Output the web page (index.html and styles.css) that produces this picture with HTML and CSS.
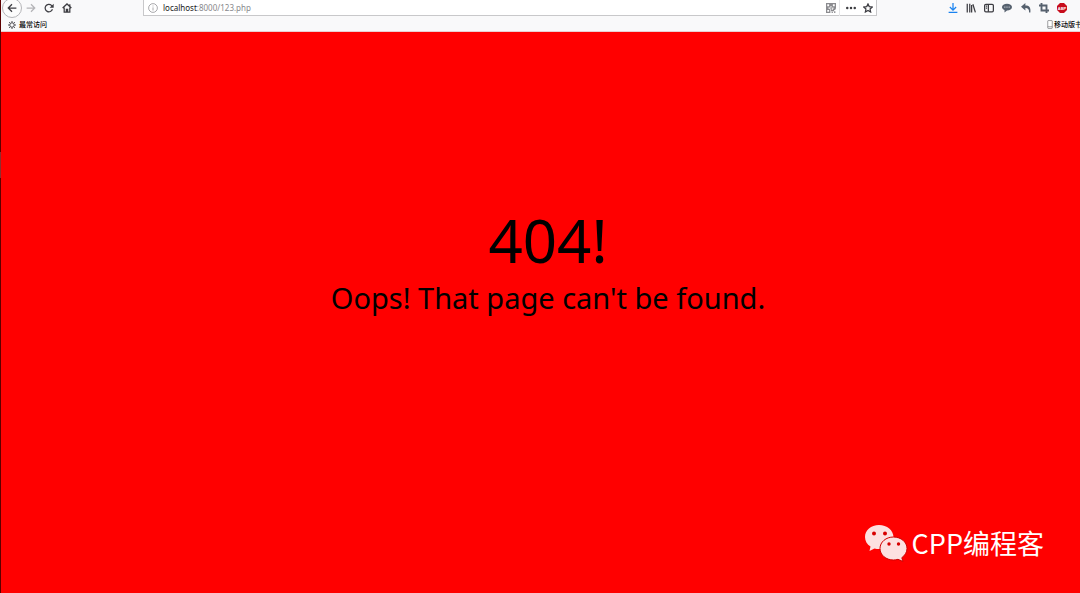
FILE: index.html
```html
<!DOCTYPE html>
<html lang="zh-CN">
<head>
<meta charset="utf-8">
<title>404</title>
<link rel="stylesheet" href="styles.css">
</head>
<body>
<div class="window">
  <header class="chrome">
    <div class="toolbar">
      <nav class="nav" aria-label="Navigation">
        <button class="tool back" aria-label="Back"><svg class="icon" viewBox="0 0 16 16"><path d="M15 8H2M8 2L2 8l6 6"/></svg></button>
        <button class="tool disabled" aria-label="Forward"><svg class="icon" viewBox="0 0 16 16"><path d="M1 8h13M8 2l6 6-6 6"/></svg></button>
        <button class="tool" aria-label="Reload"><svg class="icon" viewBox="0 0 16 16"><path d="M13.5 10A6 6 0 1 1 12 3.800L13.500 5.500"/><path class="fill" d="M15.500 1v6.500H9z"/></svg></button>
        <button class="tool" aria-label="Home"><svg class="icon" viewBox="0 0 16 16"><path d="M1 8l7-6.500L15 8M3.500 7v7.500h9V7M7 14v-4h2v4M12.500 5V2"/></svg></button>
      </nav>
      <div class="address">
        <svg class="icon info" viewBox="0 0 16 16"><circle cx="8" cy="8" r="7"/><path d="M8 7v5M8 4v1.500"/></svg>
        <a class="url" href="#"><span class="host">localhost</span>:8000/123.php</a>
        <button class="tool qr" aria-label="QR code"><svg class="icon" viewBox="0 0 16 16"><path d="M1 1h5v5H1zM10 1h5v5h-5zM1 10h5v5H1zM8 0v5M7 8h3M0 8h4M12 8h4M9 10v2h3v-2h3M9 15h2M14 13v3"/></svg></button>
        <button class="tool more" aria-label="More"><svg class="icon" viewBox="0 0 16 16"><g class="fill"><circle cx="2" cy="8" r="2"/><circle cx="8" cy="8" r="2"/><circle cx="14" cy="8" r="2"/></g></svg></button>
        <button class="tool star" aria-label="Bookmark"><svg class="icon" viewBox="0 0 16 16"><path d="M8 1.500l2 4.300 4.800.6-3.500 3.300.9 4.700L8 12l-4.200 2.400.9-4.700L1.200 6.400l4.800-.6z"/></svg></button>
      </div>
      <div class="tools">
        <button class="tool download" aria-label="Downloads"><svg class="icon" viewBox="0 0 16 16"><path d="M8 0v11M3 6.500l5 5 5-5M1 15h14"/></svg></button>
        <button class="tool" aria-label="Library"><svg class="icon" viewBox="0 0 16 16"><path d="M2 1v14M6 1v14M9 3v12M11 2l4 13"/></svg></button>
        <button class="tool" aria-label="Sidebar"><svg class="icon" viewBox="0 0 16 16"><rect x="1" y="2" width="14" height="12" rx="2"/><path d="M7 2v12M3 5h2M3 8h2"/></svg></button>
        <button class="tool slate" aria-label="Comments"><svg class="icon" viewBox="0 0 16 16"><path class="fill" d="M8 1c4.500 0 8 2.300 8 5.500S12.500 12 8 12l-4 3v-3.700C1.500 10.500 0 8.700 0 6.500 0 3.300 3.500 1 8 1z"/><path class="dots" d="M3.500 6.500h2M7 6.500h2M10.500 6.500h2"/></svg></button>
        <button class="tool slate" aria-label="Undo"><svg class="icon" viewBox="0 0 16 16"><path class="fill" d="M0 6l7-6v4c6 0 9 3 8 11h-2c0-5-2-7-6-7v4z"/></svg></button>
        <button class="tool slate" aria-label="Screenshot"><svg class="icon bold" viewBox="0 0 16 16"><path d="M4 0v12h12M0 4h12v12"/></svg></button>
        <button class="tool" aria-label="Adblock"><svg class="abp" viewBox="0 0 20 20"><path d="M6 0h8l6 6v8l-6 6H6l-6-6V6z"/><text x="10" y="13">ABP</text></svg></button>
      </div>
    </div>
    <div class="bookmarks">
      <a class="bookmark" href="#"><svg class="icon" viewBox="0 0 16 16"><circle cx="8" cy="8" r="4.500"/><path d="M8 0v3M8 13v3M0 8h3M13 8h3M2.300 2.300l2.200 2.200M11.500 11.500l2.200 2.200M2.300 13.700l2.200-2.200M11.500 4.500l2.200-2.200"/></svg>最常访问</a>
      <a class="bookmark mobile" href="#"><svg class="phone" viewBox="0 0 10 16"><rect x="1" y="1" width="8" height="14" rx="1"/><path d="M1 12h8"/></svg>移动版书</a>
    </div>
  </header>
  <main class="page">
    <h1 class="code">404!</h1>
    <p class="message">Oops! That page can't be found.</p>
  </main>
  <div class="edge"></div>
  <div class="watermark">
    <svg class="wechat" viewBox="0 0 44 38">
      <path class="bubble" d="M15 1C7 1 1 6.400 1 13c0 4 2 7.300 5.500 9.500L5.500 27l5-2.500c1.500.4 3 .6 4.500.6 8 0 14.500-5.400 14.500-12S23 1 15 1z"/>
      <path class="bubble front" d="M29.500 13C22 13 16 18 16 24.500S22 36 29.500 36c1.500 0 3-.2 4.500-.7l5 2.200-1.200-3.800c3-2.100 5.200-5.400 5.200-9.200C43 18 37 13 29.500 13z"/>
      <g class="eyes"><circle cx="10" cy="9.500" r="2"/><circle cx="21" cy="9.500" r="2"/><circle cx="25" cy="20" r="1.700"/><circle cx="34.500" cy="20" r="1.700"/></g>
    </svg>
    <span>CPP编程客</span>
  </div>
</div>
</body>
</html>
```
FILE: styles.css
```css
* { box-sizing: border-box; }

body {
  margin: 0;
  font-family: "Noto Sans", "Noto Sans CJK SC", sans-serif;
  color: #000;
}

.window {
  position: relative;
  display: flex;
  flex-direction: column;
  min-height: 100vh;
  overflow: hidden;
  background: #f00;
}

.chrome {
  height: 32px;
  padding-left: 1px;
  background: #f9f9fa;
  border-bottom: 1px solid #e8cfd0;
}

.toolbar {
  display: flex;
  height: 16px;
}

.nav {
  display: flex;
  flex: 0 0 142px;
  align-items: center;
  height: 15px;
  padding-left: 1px;
}

.tool {
  display: flex;
  flex: none;
  align-items: center;
  justify-content: center;
  width: 18px;
  height: 16px;
  padding: 0;
  border: 0;
  background: none;
  color: #3d3d42;
}

.back {
  width: 20px;
  height: 20px;
  border: 1px solid #b5b5b8;
  border-radius: 50%;
  background: #fcfcfc;
}

.disabled { color: #b4b4b7; }
.slate { color: #56616e; }
.download { color: #1a83f0; }

.icon {
  flex: none;
  width: 10px;
  height: 10px;
  fill: none;
  stroke: currentColor;
  stroke-width: 2;
}

.bold { stroke-width: 3; }
.icon .fill { fill: currentColor; stroke: none; }
.icon .dots { stroke: #b9c0c8; }

.address {
  display: flex;
  flex: 1;
  align-items: center;
  height: 16px;
  padding-left: 4px;
  border: 1px solid #c8c8ca;
  border-top: 0;
  background: #fff;
}

.info {
  color: #77777b;
  stroke-width: 1;
}

.url {
  flex: 1;
  padding-left: 5px;
  font-size: 8px;
  line-height: 14px;
  color: #88888b;
  text-decoration: none;
}

.host { color: #18181a; }

.qr {
  color: #8b8b8f;
  border-right: 1px solid #e6e6e8;
}

.more { margin-left: 2px; }
.star { width: 16px; }

.tools {
  display: flex;
  flex: 0 0 203px;
  align-items: center;
  justify-content: space-between;
  height: 15px;
  padding: 0 9px 0 67px;
}

.abp {
  width: 10px;
  height: 10px;
  fill: #c70d1c;
}

.abp text {
  font-size: 8px;
  font-weight: 700;
  text-anchor: middle;
  fill: #fff;
}

.bookmarks {
  display: flex;
  justify-content: space-between;
  height: 15px;
  padding-left: 7px;
}

.bookmark {
  display: flex;
  align-items: center;
  gap: 3px;
  height: 17px;
  font-size: 7px;
  font-weight: 500;
  line-height: 17px;
  white-space: nowrap;
  color: #000;
  text-decoration: none;
}

.bookmark .icon {
  width: 8px;
  height: 8px;
  color: #4a4a4f;
}

.mobile {
  gap: 1px;
  margin-right: -2px;
}

.phone {
  width: 6px;
  height: 9px;
  fill: #fff;
  stroke: #55555a;
}

.page {
  flex: 1;
  padding: 166px 0 0 16px;
  text-align: center;
}

.code {
  margin: 0;
  font-size: 60px;
  font-weight: 400;
  line-height: 84px;
}

.message {
  margin: 0;
  font-size: 29px;
  line-height: 32px;
}

.edge {
  position: absolute;
  top: 0;
  bottom: 0;
  left: 0;
  width: 1px;
  background: linear-gradient(#5c0000 152px, #8c3030 152px 178px, #5c0000 178px);
}

.watermark {
  position: absolute;
  right: 36px;
  bottom: 30px;
  display: flex;
  align-items: center;
  gap: 4px;
  font-family: "Noto Sans CJK SC", sans-serif;
  font-size: 27px;
  line-height: 40px;
  color: #fff;
}

.wechat {
  width: 44px;
  height: 38px;
}

.bubble { fill: #fde0e0; }
.front { stroke: #d00000; stroke-width: 1; }
.eyes { fill: #d80000; }
```
